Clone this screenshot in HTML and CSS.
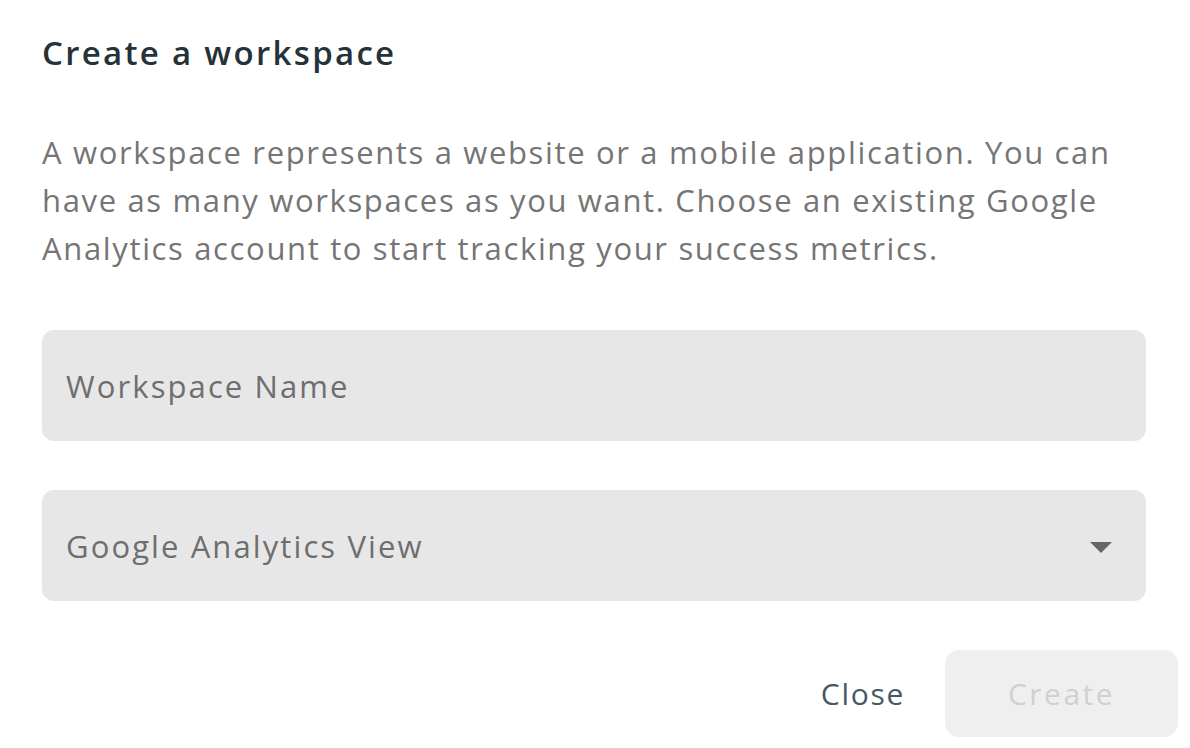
FILE: index.html
```html
<!DOCTYPE html>
<html lang="en">
<head>
<meta charset="utf-8">
<title>Create a workspace</title>
<link rel="stylesheet" href="styles.css">
</head>
<body>
<div class="dialog">
  <h1 class="title">Create a workspace</h1>
  <p class="desc">A workspace represents a website or a mobile application. You can<br>have as many workspaces as you want. Choose an existing Google<br>Analytics account to start tracking your success metrics.</p>
  <div class="field">
    <span class="placeholder">Workspace Name</span>
  </div>
  <div class="field select">
    <span class="placeholder">Google Analytics View</span>
    <svg class="arrow" width="22" height="11" viewBox="0 0 22 11"><path d="M0 0 H22 L11 11 Z" fill="#666"/></svg>
  </div>
  <div class="actions">
    <button class="btn-close">Close</button>
    <button class="btn-create" disabled>Create</button>
  </div>
</div>
</body>
</html>
```
FILE: styles.css
```css
html, body {
  margin: 0;
  padding: 0;
  background: #ffffff;
}
body {
  font-family: "Open Sans", "DejaVu Sans", sans-serif;
}
.dialog {
  width: 1104px;
  padding: 32px 0 0 42px;
  box-sizing: content-box;
}
.title {
  margin: 0;
  font-size: 33px;
  line-height: 42px;
  font-weight: 600;
  color: #263238;
  letter-spacing: 2.3px;
}
.desc {
  margin: 54px 0 0;
  font-size: 31px;
  line-height: 48px;
  color: #757575;
  letter-spacing: 1.65px;
  white-space: nowrap;
}
.field {
  margin-top: 58px;
  height: 111px;
  background: #e7e7e7;
  border-radius: 12px;
  display: flex;
  align-items: center;
  padding: 0 34px 0 24px;
}
.field.select {
  margin-top: 49px;
  justify-content: space-between;
}
.placeholder {
  font-size: 31px;
  color: #6e6e6e;
  letter-spacing: 2.1px;
}
.arrow {
  display: block;
  margin-top: 4px;
}
.actions {
  margin-top: 49px;
  margin-right: -32px;
  display: flex;
  justify-content: flex-end;
  align-items: center;
  gap: 40px;
}
.btn-close {
  border: none;
  background: none;
  padding: 0;
  font-family: inherit;
  font-size: 30px;
  color: #455a64;
  letter-spacing: 1.7px;
}
.btn-create {
  width: 233px;
  height: 87px;
  border: none;
  border-radius: 14px;
  background: #efefef;
  font-family: inherit;
  font-size: 30px;
  color: #d0d0d0;
  letter-spacing: 2.5px;
}
```
